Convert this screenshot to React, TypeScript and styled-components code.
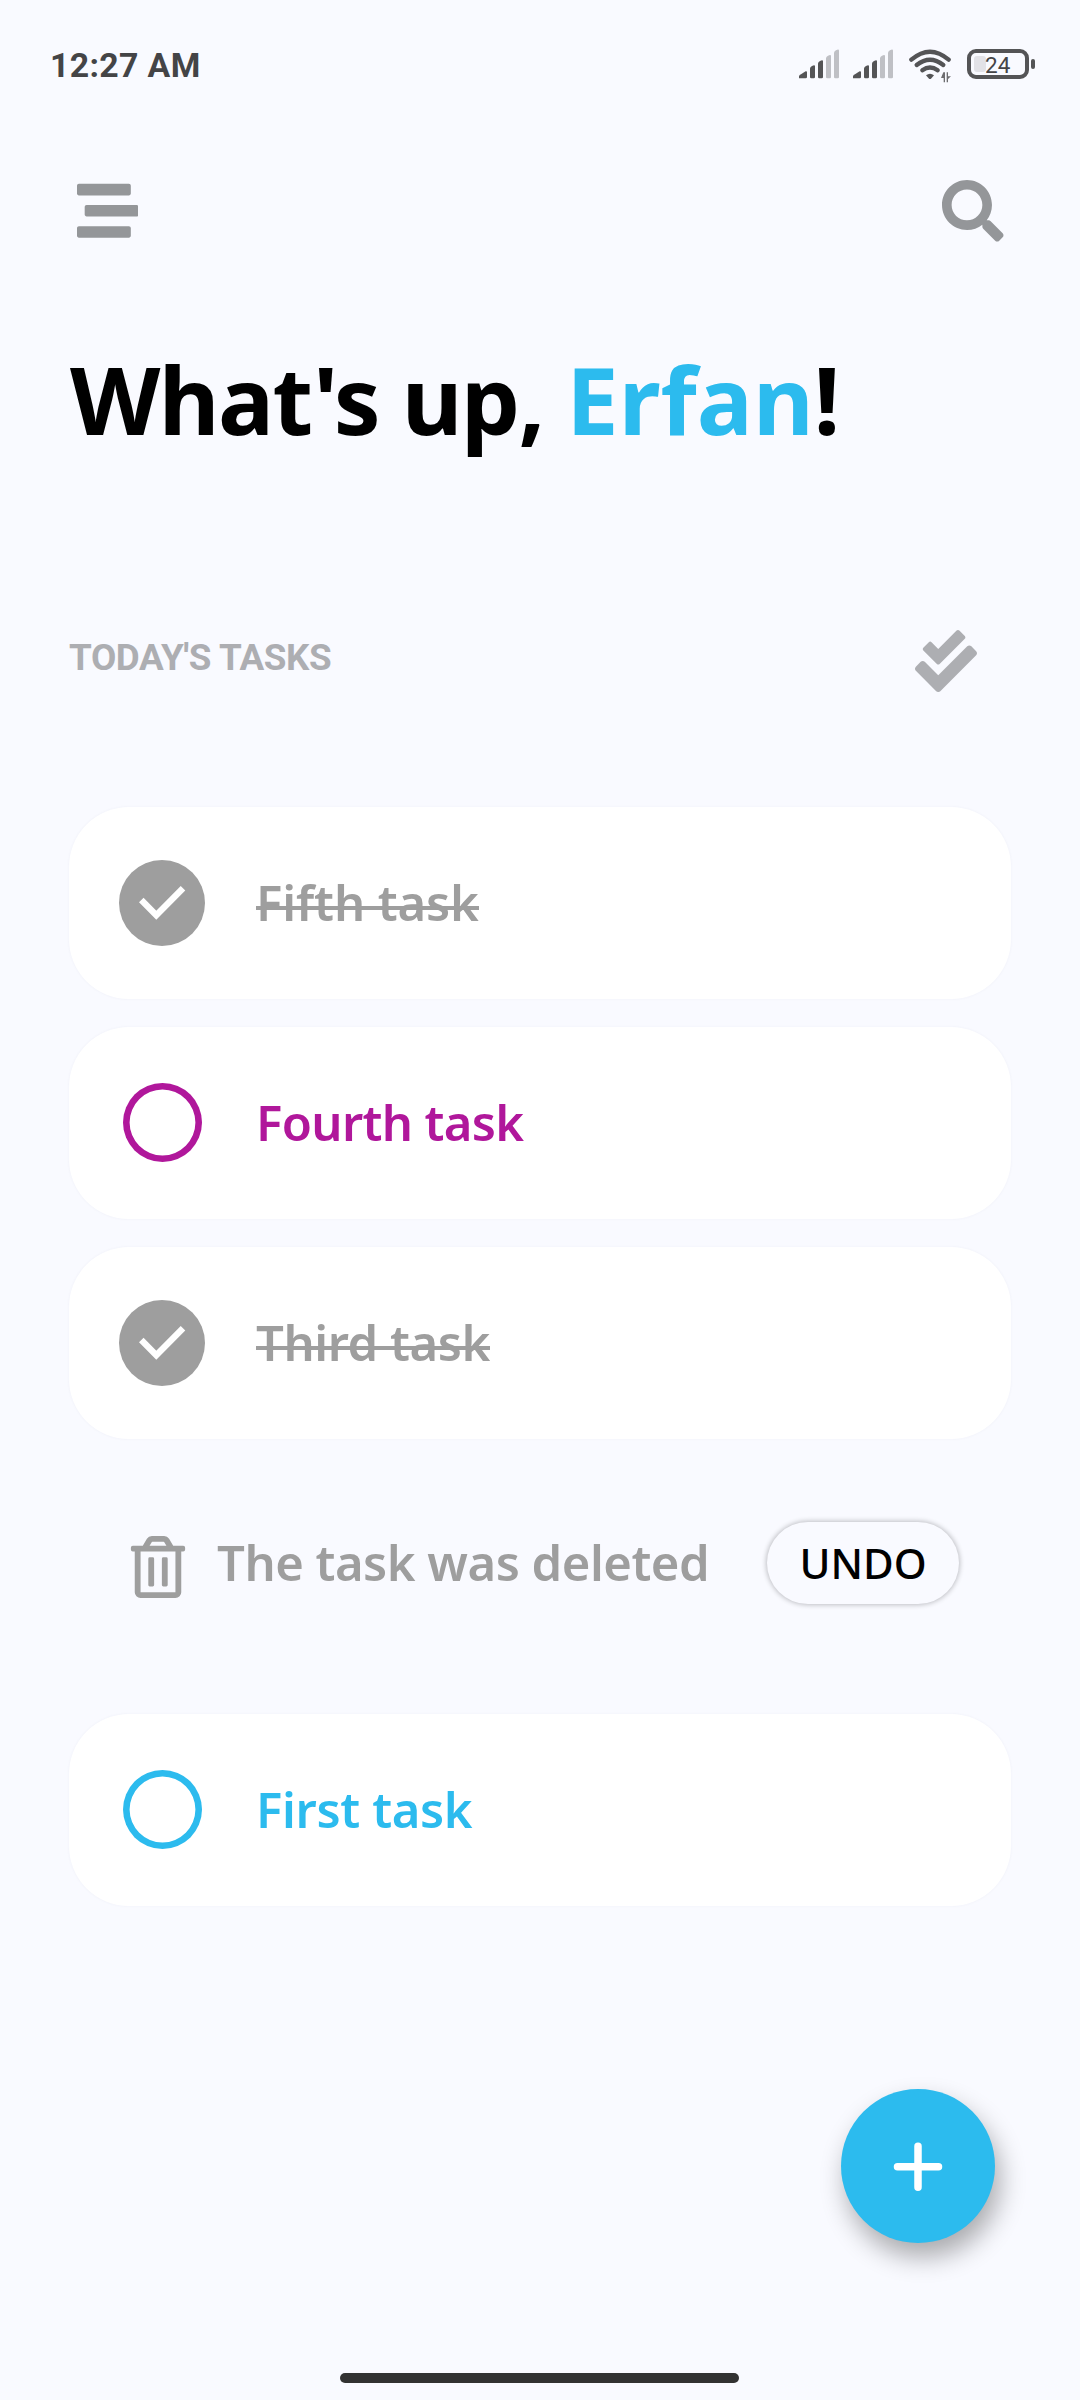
import React from "react";
import styled, { createGlobalStyle } from "styled-components";
import { FaCheckDouble, FaRegTrashAlt, FaSearch, FaStream } from "react-icons/fa";

const GlobalStyle = createGlobalStyle`
  * { box-sizing: border-box; }
  body { margin: 0; background: #f9faff; }
  button { border: 0; padding: 0; background: none; font: inherit; color: inherit; }
  svg { display: block; flex: none; }
`;

const ui = `"Noto Sans", "Open Sans", sans-serif`;

const Screen = styled.main`
  width: 1080px;
  height: 2400px;
  overflow: hidden;
  display: flex;
  flex-direction: column;
  background: #f9faff;
  font-family: ${ui};
`;

const StatusBar = styled.header`
  height: 130px;
  flex: none;
  display: flex;
  align-items: center;
  justify-content: space-between;
  padding: 0 45px 0 50px;
`;

const Clock = styled.time`
  padding-top: 2px;
  font: 700 33.8px/40px Roboto, sans-serif;
  letter-spacing: 0.35px;
  color: #444446;
`;

const StatusIcons = styled.div`
  display: flex;
  align-items: center;
  padding-top: 1px;
`;

const Signal = styled.svg`
  width: 41px;
  height: 34px;
  margin-right: 13px;
`;

const Wifi = styled.svg`
  width: 44px;
  height: 34px;
  margin-left: 2px;
`;

const Battery = styled.div`
  display: flex;
  align-items: center;
  gap: 2px;
  margin: 0 0 3px 14px;
`;

const BatteryBody = styled.div`
  width: 62px;
  height: 30px;
  border: 4px solid #545456;
  border-radius: 9px;
  display: flex;
  align-items: center;
  padding-left: 3px;
`;

const BatteryFill = styled.span`
  width: 12px;
  height: 16px;
  flex: none;
  border-radius: 3px;
  background: #e2e2e7;
`;

const BatteryValue = styled.span`
  margin: 2px 0 0 -1px;
  font: 400 22.5px/22px Roboto, sans-serif;
  color: #454547;
`;

const BatteryTip = styled.span`
  width: 4px;
  height: 10px;
  border-radius: 2px;
  background: #545456;
`;

const Toolbar = styled.nav`
  height: 162px;
  flex: none;
  display: flex;
  justify-content: space-between;
  align-items: flex-start;
  padding: 50.3px 76.3px 0 76.7px;
  color: #949699;
`;

const Greeting = styled.h1`
  margin: 37px 0 0 70px;
  font-weight: 700;
  font-size: 93.5px;
  line-height: 140px;
  letter-spacing: -1.6px;
  white-space: nowrap;
  color: #000;
`;

const Name = styled.span`
  letter-spacing: 0.1px;
  color: #2cbbee;
`;

const SectionHeader = styled.div`
  display: flex;
  align-items: center;
  justify-content: space-between;
  height: 62px;
  margin: 161px 103px 0 69px;
  color: #adaeb2;
`;

const SectionTitle = styled.h2`
  margin: 0 0 7px;
  font: 700 36.8px/44px Roboto, sans-serif;
  letter-spacing: -0.4px;
`;

const TaskList = styled.ul`
  list-style: none;
  margin: 115px 69px 0;
  padding: 0;
  display: flex;
  flex-direction: column;
  gap: 28px;
`;

const Card = styled.li`
  height: 192px;
  display: flex;
  align-items: center;
  padding-left: 50px;
  border-radius: 60px;
  background: #fff;
  box-shadow: 0 0 3px rgba(60, 60, 110, 0.05);
`;

const Check = styled.span<{ $color: string; $done?: boolean }>`
  width: ${(p) => (p.$done ? 86 : 79)}px;
  height: ${(p) => (p.$done ? 86 : 79)}px;
  margin: 0 ${(p) => (p.$done ? 0 : 3.5)}px ${(p) => (p.$done ? 0 : 1)}px;
  flex: none;
  border-radius: 50%;
  box-shadow: inset 0 0 0 ${(p) => (p.$done ? 0 : 6.6)}px ${(p) => p.$color};
  background: ${(p) => (p.$done ? p.$color : "transparent")};
`;

const Label = styled.span<{ $color: string; $track: number }>`
  margin: -2px 0 0 51px;
  font-weight: 600;
  font-size: 49px;
  line-height: 66px;
  letter-spacing: ${(p) => p.$track}px;
  white-space: nowrap;
  color: ${(p) => p.$color};
`;

const DoneLabel = styled(Label)`
  background: linear-gradient(${(p) => p.$color}, ${(p) => p.$color}) 0 37px / 100% 4px no-repeat;
`;

const DeletedRow = styled.li`
  height: 192px;
  margin-bottom: 27px;
  display: flex;
  align-items: center;
  padding: 0 52px 0 58px;
  color: #9e9e9e;
`;

const TrashIcon = styled(FaRegTrashAlt)`
  margin-top: 7px;
`;

const DeletedText = styled.span`
  margin: -2px auto 0 28px;
  font-weight: 600;
  font-size: 49px;
  line-height: 66px;
  letter-spacing: -0.5px;
  white-space: nowrap;
`;

const UndoButton = styled.button`
  && {
    width: 192px;
    height: 82px;
    border-radius: 41px;
    background: #f9faff;
    color: #000;
    font: 500 42px/60px ${ui};
    box-shadow: 0 0 5px 1px rgba(0, 0, 0, 0.24);
  }
`;

const Fab = styled.button`
  && {
    width: 154px;
    height: 154px;
    margin: 183px 85px 0 auto;
    flex: none;
    display: grid;
    place-items: center;
    border-radius: 50%;
    background: #2cbbee;
    box-shadow: 5px 14px 26px rgba(0, 0, 0, 0.32);
  }
`;

const HomeIndicator = styled.div`
  width: 399px;
  height: 10px;
  flex: none;
  margin: auto auto 17px 340px;
  border-radius: 5px;
  background: #323232;
`;

function SignalIcon() {
  return (
    <Signal viewBox="0 0 123 102">
      <g fill="#545456">
        <path d="M0 88V82Q1 78 6 76L20 67Q24 66 24 70V84Q24 88 20 88Z" />
        <path d="M33 58Q34 54 39 51Q48 46 48 52V84Q48 88 44 88H37Q33 88 33 84Z" />
        <path d="M57 43Q58 39 63 36Q72 31 72 37V84Q72 88 68 88H61Q57 88 57 84Z" />
      </g>
      <g fill="#bfc0c5">
        <path d="M81 27Q82 23 87 20Q96 15 96 21V84Q96 88 92 88H85Q81 88 81 84Z" />
        <path d="M105 11Q106 7 111 4Q120 -1 120 5V84Q120 88 116 88H109Q105 88 105 84Z" />
      </g>
    </Signal>
  );
}

function WifiIcon() {
  return (
    <Wifi viewBox="0 0 132 102">
      <g fill="none" stroke="#545456" strokeWidth="13" strokeLinecap="round">
        <path d="M7 32Q63 -16 119 32" />
        <path d="M23 48Q63 16 103 48" />
        <path d="M40 64Q63 47 86 64" />
      </g>
      <path d="M51 79Q63 70 75 79L66 89Q63 91 60 89Z" fill="#545456" />
      <path d="M103 70H108V100H104V87H96Z M113 70H117V82H126L117 90V100H113Z" fill="#6d6d70" />
    </Wifi>
  );
}

function CheckMark() {
  return (
    <svg width="86" height="86" viewBox="0 0 86 86">
      <path d="M22.3 40L37.3 55.3L64 28.3" fill="none" stroke="#fff" strokeWidth="6.4" />
    </svg>
  );
}

const GREY = "#9e9e9e";

function Task({ text, color, done, track }: { text: string; color: string; done?: boolean; track: number }) {
  const Text = done ? DoneLabel : Label;
  return (
    <Card>
      <Check $color={color} $done={done}>{done && <CheckMark />}</Check>
      <Text $color={color} $track={track}>{text}</Text>
    </Card>
  );
}

export default function App() {
  return (
    <Screen>
      <GlobalStyle />
      <StatusBar>
        <Clock>12:27 AM</Clock>
        <StatusIcons>
          <SignalIcon />
          <SignalIcon />
          <WifiIcon />
          <Battery>
            <BatteryBody>
              <BatteryFill />
              <BatteryValue>24</BatteryValue>
            </BatteryBody>
            <BatteryTip />
          </Battery>
        </StatusIcons>
      </StatusBar>
      <Toolbar>
        <FaStream size={61.5} />
        <FaSearch size={61.5} />
      </Toolbar>
      <Greeting>
        What's up, <Name>Erfan</Name>!
      </Greeting>
      <SectionHeader>
        <SectionTitle>TODAY'S TASKS</SectionTitle>
        <FaCheckDouble size={62} />
      </SectionHeader>
      <TaskList>
        <Task text="Fifth task" color={GREY} done track={-0.1} />
        <Task text="Fourth task" color="#b0179b" track={-0.65} />
        <Task text="Third task" color={GREY} done track={-0.45} />
        <DeletedRow>
          <TrashIcon size={62} />
          <DeletedText>The task was deleted</DeletedText>
          <UndoButton>UNDO</UndoButton>
        </DeletedRow>
        <Task text="First task" color="#2cbbee" track={-0.35} />
      </TaskList>
      <Fab aria-label="Add task">
        <svg width="50" height="50" viewBox="0 0 50 50">
          <path d="M25 5.2V46.2M4.5 25.7H45.5" stroke="#fff" strokeWidth="7.5" strokeLinecap="round" />
        </svg>
      </Fab>
      <HomeIndicator />
    </Screen>
  );
}
